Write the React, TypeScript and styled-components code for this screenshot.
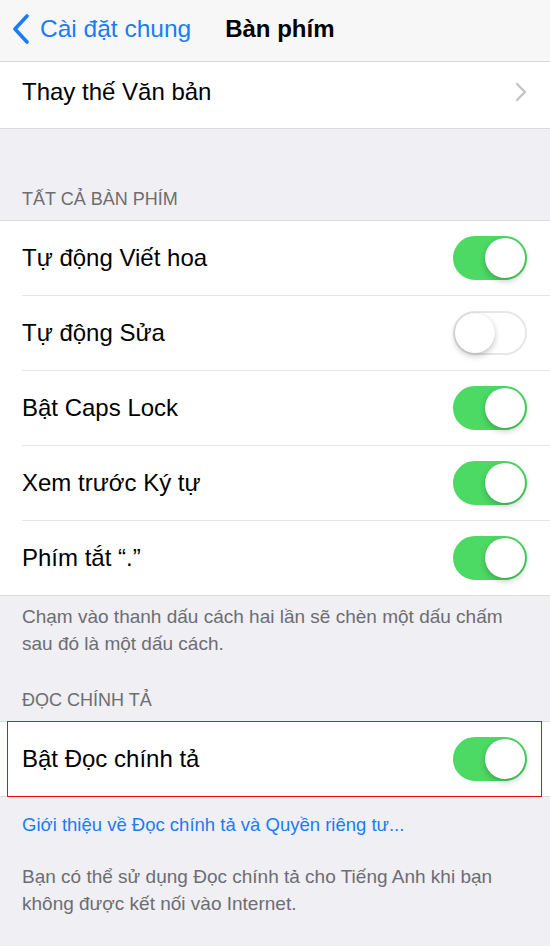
import { FC } from 'react'
import styled, { createGlobalStyle } from 'styled-components'

const GlobalStyle = createGlobalStyle`
  html, body {
    margin: 0;
    padding: 0;
    background: #efeff4;
  }
  body {
    font-family: "Liberation Sans", Arial, sans-serif;
    -webkit-font-smoothing: antialiased;
  }
`

const Page = styled.div`
  width: 550px;
  min-height: 946px;
  background: #efeff4;
  display: flex;
  flex-direction: column;
`

const NavBar = styled.div`
  height: 61px;
  background: #f7f7f8;
  border-bottom: 1px solid #d6d6da;
  display: flex;
  align-items: center;
  padding-left: 12px;
  box-sizing: content-box;
`

const BackButton = styled.div`
  display: flex;
  align-items: center;
  gap: 10px;
  color: #1a7cf6;
  font-size: 24.5px;
  margin-top: -3px;
`

const NavTitle = styled.div`
  margin-left: 34px;
  font-size: 24px;
  font-weight: 700;
  color: #000;
  margin-top: -3px;
`

const Group = styled.div<{ $noTop?: boolean }>`
  background: #fff;
  border-top: ${p => (p.$noTop ? 'none' : '1px solid #dcdce0')};
  border-bottom: 1px solid #dcdce0;
`

const Row = styled.div<{ $h?: number; $last?: boolean; $lift?: number }>`
  height: ${p => (p.$h ?? 74) - (p.$lift ?? 0)}px;
  margin-left: 22px;
  padding-right: 23px;
  padding-bottom: ${p => p.$lift ?? 0}px;
  display: flex;
  align-items: center;
  justify-content: space-between;
  border-bottom: ${p => (p.$last ? 'none' : '1px solid #e4e4e8')};
  font-size: 24px;
  color: #000;
`

const Highlight = styled.div`
  position: relative;
  &::after {
    content: '';
    position: absolute;
    left: 7px;
    right: 8px;
    top: 0;
    bottom: 0;
    border: 1px solid #f00a0a;
    pointer-events: none;
  }
`

const SectionHeader = styled.div<{ $top: number }>`
  padding: ${p => p.$top}px 22px 10px;
  font-size: 18px;
  color: #6d6d72;
  text-transform: uppercase;
`

const Footer = styled.div<{ $top?: number }>`
  padding: ${p => p.$top ?? 10}px 22px 0;
  font-size: 19px;
  line-height: 27px;
  color: #6d6d72;
`

const Link = styled.div`
  padding: 17px 22px 0;
  font-size: 18.5px;
  color: #1a7cf6;
`

const Track = styled.div<{ $on: boolean }>`
  width: 74px;
  height: 44px;
  border-radius: 22px;
  box-sizing: border-box;
  background: ${p => (p.$on ? '#4cd964' : '#fff')};
  border: 2px solid ${p => (p.$on ? '#4cd964' : '#e5e5ea')};
  display: flex;
  align-items: center;
  justify-content: ${p => (p.$on ? 'flex-end' : 'flex-start')};
  flex-shrink: 0;
`

const Knob = styled.div`
  width: 40px;
  height: 40px;
  border-radius: 50%;
  background: #fff;
  box-shadow: 0 3px 6px rgba(0, 0, 0, 0.22), 0 0 1px rgba(0, 0, 0, 0.15);
`

const Toggle: FC<{ on?: boolean }> = ({ on = true }) => (
  <Track $on={on}>
    <Knob />
  </Track>
)

const ChevronLeft = () => (
  <svg width="18" height="30" viewBox="0 0 18 30">
    <path d="M15 2 L3 15 L15 28" fill="none" stroke="#1a7cf6" strokeWidth="3.6" strokeLinecap="round" strokeLinejoin="round" />
  </svg>
)

const ChevronRight = () => (
  <svg width="12" height="20" viewBox="0 0 12 20">
    <path d="M2 2 L10 10 L2 18" fill="none" stroke="#c4c4c8" strokeWidth="2.4" strokeLinecap="round" strokeLinejoin="round" />
  </svg>
)

const toggles: [string, boolean][] = [
  ['Tự động Viết hoa', true],
  ['Tự động Sửa', false],
  ['Bật Caps Lock', true],
  ['Xem trước Ký tự', true],
  ['Phím tắt “.”', true],
]

export default function App() {
  return (
    <Page>
      <GlobalStyle />
      <NavBar>
        <BackButton>
          <ChevronLeft />
          Cài đặt chung
        </BackButton>
        <NavTitle>Bàn phím</NavTitle>
      </NavBar>

      <Group $noTop>
        <Row $h={66} $lift={6} $last>
          Thay thế Văn bản
          <ChevronRight />
        </Row>
      </Group>

      <SectionHeader $top={60}>Tất cả bàn phím</SectionHeader>
      <Group>
        {toggles.map(([label, on], i) => (
          <Row key={label} $last={i === toggles.length - 1}>
            {label}
            <Toggle on={on} />
          </Row>
        ))}
      </Group>
      <Footer $top={7}>
        Chạm vào thanh dấu cách hai lần sẽ chèn một dấu chấm sau đó là một dấu cách.
      </Footer>

      <SectionHeader $top={33}>Đọc chính tả</SectionHeader>
      <Highlight>
        <Group>
          <Row $last>
            Bật Đọc chính tả
            <Toggle />
          </Row>
        </Group>
      </Highlight>
      <Link>Giới thiệu về Đọc chính tả và Quyền riêng tư...</Link>
      <Footer $top={27}>
        Bạn có thể sử dụng Đọc chính tả cho Tiếng Anh khi bạn không được kết nối vào Internet.
      </Footer>
    </Page>
  )
}
